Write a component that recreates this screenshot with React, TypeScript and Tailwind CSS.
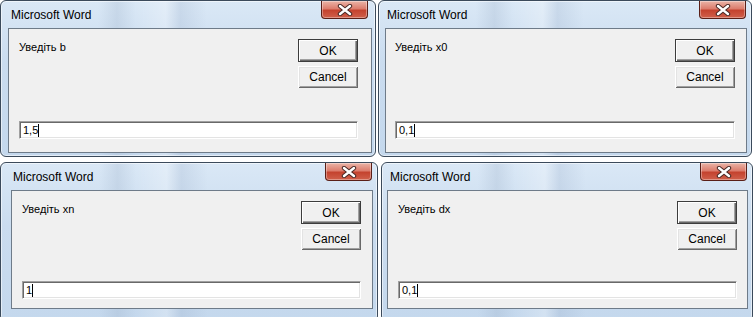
import type { ReactNode } from 'react';

type DialogProps = {
  frame: string;
  titlePad: string;
  closeGap: string;
  clientBox: string;
  label: string;
  value: string;
  bottomSpace: string;
};

function CloseButton({ gap }: { gap: string }) {
  return (
    <div
      className={`${gap} w-[47px] h-[18px] rounded-b-[4px] border border-t-0 border-[#5a1f17] bg-[linear-gradient(180deg,#eab4a7_0%,#dc7d6d_45%,#c4432f_55%,#d0604b_100%)] shadow-[inset_0_0_0_1px_rgba(255,255,255,0.35)] flex items-center justify-center`}
    >
      <svg width="16" height="12" viewBox="0 0 16 12">
        <path d="M3 2 L13 10 M13 2 L3 10" stroke="#4a2a26" strokeWidth="4.4" strokeLinecap="round" />
        <path d="M3 2 L13 10 M13 2 L3 10" stroke="#ffffff" strokeWidth="2.4" strokeLinecap="round" />
      </svg>
    </div>
  );
}

function WinButton({ children, primary }: { children: ReactNode; primary?: boolean }) {
  return (
    <div
      className={
        primary
          ? 'h-[23px] border border-[#3c3c3c] bg-[#f0f0f0] shadow-[inset_1px_1px_#ffffff,inset_-1px_-1px_#696969,inset_-2px_-2px_#a0a0a0] flex items-center justify-center text-[12px] text-black'
          : 'h-[22px] bg-[#f0f0f0] shadow-[inset_1px_1px_#ffffff,inset_-1px_-1px_#696969,inset_2px_2px_#e3e3e3,inset_-2px_-2px_#a0a0a0] flex items-center justify-center text-[12px] text-black'
      }
    >
      {children}
    </div>
  );
}

function InputDialog({ frame, titlePad, closeGap, clientBox, label, value, bottomSpace }: DialogProps) {
  return (
    <div
      className={`${frame} flex-none flex flex-col rounded-[6px] border border-[#3b4a5b] bg-[linear-gradient(90deg,rgba(255,255,255,0)_0%,rgba(255,255,255,0)_26%,rgba(150,170,195,0.25)_31%,rgba(255,255,255,0)_36%,rgba(255,255,255,0.25)_44%,rgba(140,160,190,0.2)_48%,rgba(255,255,255,0)_55%),linear-gradient(180deg,#dae8f6_0%,#cadcef_40%,#c4d8ed_100%)] shadow-[inset_0_0_0_1px_rgba(255,255,255,0.55)] overflow-hidden`}
    >
      <div className="flex justify-between items-start h-[27px] flex-none">
        <span className={`${titlePad} mt-[6px] text-[12px] leading-[16px] text-black`}>Microsoft Word</span>
        <CloseButton gap={closeGap} />
      </div>
      <div className={`${clientBox} flex-none border border-[#6e7b89] bg-[#f0f0f0] flex flex-col pt-[10px]`}>
        <div className="flex justify-between">
          <span className="mt-[2px] text-[11px] leading-[13px] text-black">{label}</span>
          <div className="w-[60px] flex flex-col gap-[4px]">
            <WinButton primary>OK</WinButton>
            <WinButton>Cancel</WinButton>
          </div>
        </div>
        <div
          className={`${bottomSpace} h-[18px] bg-white border-t border-l border-[#a0a0a0] border-r border-b border-r-white border-b-white shadow-[inset_1px_1px_#696969,inset_-1px_-1px_#e3e3e3] flex items-center pl-[3px]`}
        >
          <span className="text-[11px] leading-[13px] text-black">{value}</span>
          <span className="w-px h-[13px] bg-black" />
        </div>
      </div>
    </div>
  );
}

export default function App() {
  return (
    <div className="w-[754px] h-[317px] overflow-hidden bg-white flex flex-col gap-[5px] font-['Liberation_Sans',Arial,sans-serif]">
      <div className="flex gap-[2px] h-[157px] flex-none">
        <InputDialog
          frame="w-[376px] h-[157px]"
          titlePad="ml-[10px]"
          closeGap="mr-[7px]"
          clientBox="ml-[7px] mr-[3px] h-[125px] pl-[10px] pr-[13px]"
          label="Уведіть b"
          value="1,5"
          bottomSpace="mt-[33px]"
        />
        <InputDialog
          frame="w-[374px] h-[157px]"
          titlePad="ml-[8px]"
          closeGap="mr-[5px]"
          clientBox="ml-[6px] mr-[4px] h-[125px] pl-[9px] pr-[11px]"
          label="Уведіть x0"
          value="0,1"
          bottomSpace="mt-[33px]"
        />
      </div>
      <div className="flex gap-[3px] flex-none">
        <InputDialog
          frame="w-[378px] h-[160px]"
          titlePad="ml-[12px]"
          closeGap="mr-[5px]"
          clientBox="ml-[10px] mr-[4px] h-[119px] pl-[10px] pr-[11px]"
          label="Уведіть xn"
          value="1"
          bottomSpace="mt-[31px]"
        />
        <InputDialog
          frame="w-[372px] h-[160px]"
          titlePad="ml-[8px]"
          closeGap="mr-[5px]"
          clientBox="ml-[5px] mr-[4px] h-[119px] pl-[10px] pr-[10px]"
          label="Уведіть dx"
          value="0,1"
          bottomSpace="mt-[31px]"
        />
      </div>
    </div>
  );
}
